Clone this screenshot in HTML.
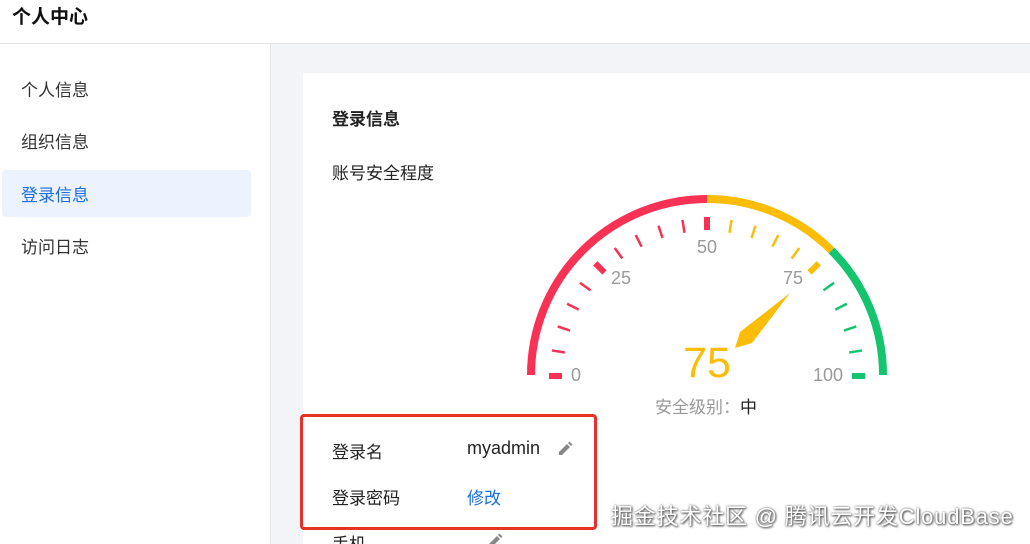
<!DOCTYPE html>
<html><head><meta charset="utf-8"><style>
*{margin:0;padding:0;box-sizing:border-box}
html,body{width:1030px;height:544px;overflow:hidden}
body{background:#f3f4f7;font-family:"Liberation Sans","Noto Sans CJK SC",sans-serif;position:relative;color:#222}
.hdr{position:absolute;left:0;top:0;width:1030px;height:44px;background:#fff;border-bottom:1px solid #e3e3e3}
.hdr span{position:absolute;left:12px;top:2px;font-size:19px;font-weight:bold;color:#111}
.side{position:absolute;left:0;top:44px;width:271px;height:500px;background:#fff;border-right:1px solid #e6e6e6}
.mi{position:absolute;left:21px;font-size:17px;color:#333}
.act{position:absolute;left:2px;top:126px;width:249px;height:47px;background:#ecf2fe;border-radius:4px}
.card{position:absolute;left:303px;top:73px;width:727px;height:471px;background:#fff}
.t{position:absolute;font-size:17px;color:#222}
.red{position:absolute;left:300px;top:414px;width:297px;height:116px;border:3px solid #e5312a;border-radius:4px}
.wm{position:absolute;left:611px;top:499px;font-size:22px;color:#fff;text-shadow:0 0 2px #555,1px 1px 2px #444;letter-spacing:0.8px}
</style></head><body>
<div class="hdr"><span>个人中心</span></div>
<div class="side">
<div class="act"></div>
<div class="mi" style="top:32px">个人信息</div>
<div class="mi" style="top:84px">组织信息</div>
<div class="mi" style="top:137px;color:#1a6fe0">登录信息</div>
<div class="mi" style="top:189px">访问日志</div>
</div>
<div class="card"></div>
<div class="t" style="left:332px;top:105px;font-weight:bold">登录信息</div>
<div class="t" style="left:332px;top:159px">账号安全程度</div>
<svg style="position:absolute;left:0;top:0" width="1030" height="544">
<g fill="none" stroke-width="8">
<path d="M531 375 A176 176 0 0 1 707 199" stroke="#f83255"/>
<path d="M707 199 A176 176 0 0 1 831.5 250.5" stroke="#fbbd08"/>
<path d="M831.5 250.5 A176 176 0 0 1 883 375" stroke="#14c46e"/>
</g>
<g>
<line x1="549" y1="376" x2="562" y2="376" stroke="#f83255" stroke-width="6"/>
<line x1="549" y1="375" x2="562" y2="375" stroke="#f83255" stroke-width="6" transform="rotate(45 707 375)"/>
<line x1="549" y1="375" x2="562" y2="375" stroke="#f83255" stroke-width="6" transform="rotate(90 707 375)"/>
<line x1="549" y1="375" x2="562" y2="375" stroke="#fbbd08" stroke-width="6" transform="rotate(135 707 375)"/>
<line x1="549" y1="374" x2="562" y2="374" stroke="#14c46e" stroke-width="6" transform="rotate(180 707 375)"/>
</g>
<g stroke-width="2.5">
<g stroke="#f83255">
<line x1="550" y1="375" x2="563" y2="375" transform="rotate(9 707 375)"/>
<line x1="550" y1="375" x2="563" y2="375" transform="rotate(18 707 375)"/>
<line x1="550" y1="375" x2="563" y2="375" transform="rotate(27 707 375)"/>
<line x1="550" y1="375" x2="563" y2="375" transform="rotate(36 707 375)"/>
<line x1="550" y1="375" x2="563" y2="375" transform="rotate(54 707 375)"/>
<line x1="550" y1="375" x2="563" y2="375" transform="rotate(63 707 375)"/>
<line x1="550" y1="375" x2="563" y2="375" transform="rotate(72 707 375)"/>
<line x1="550" y1="375" x2="563" y2="375" transform="rotate(81 707 375)"/>
</g>
<g stroke="#fbbd08">
<line x1="550" y1="375" x2="563" y2="375" transform="rotate(99 707 375)"/>
<line x1="550" y1="375" x2="563" y2="375" transform="rotate(108 707 375)"/>
<line x1="550" y1="375" x2="563" y2="375" transform="rotate(117 707 375)"/>
<line x1="550" y1="375" x2="563" y2="375" transform="rotate(126 707 375)"/>
</g>
<g stroke="#14c46e">
<line x1="550" y1="375" x2="563" y2="375" transform="rotate(144 707 375)"/>
<line x1="550" y1="375" x2="563" y2="375" transform="rotate(153 707 375)"/>
<line x1="550" y1="375" x2="563" y2="375" transform="rotate(162 707 375)"/>
<line x1="550" y1="375" x2="563" y2="375" transform="rotate(171 707 375)"/>
</g>
</g>
<g font-family="Liberation Sans,sans-serif" font-size="18" fill="#999" text-anchor="middle">
<text x="576" y="381">0</text>
<text x="621" y="284">25</text>
<text x="707" y="253">50</text>
<text x="793" y="284">75</text>
<text x="828" y="381">100</text>
</g>
<polygon points="790,293 740,332 735,348 752,343" fill="#fbbd08"/>
<text x="707" y="377" text-anchor="middle" font-family="Liberation Sans,sans-serif" font-size="43" fill="#fbbd08">75</text>
</svg>
<div class="t" style="left:655px;top:393px;font-size:17px;color:#999">安全级别：<span style="color:#222">中</span></div>
<div class="red"></div>
<div class="t" style="left:332px;top:438px">登录名</div>
<div class="t" style="left:467px;top:438px;font-size:18px">myadmin</div>
<svg style="position:absolute;left:557px;top:441px" width="16" height="16"><path d="M2 14 L2 11 L10 3 L13 6 L5 14 Z M11 2 L12.5 0.5 L15.5 3.5 L14 5 Z" fill="#888"/></svg>
<div class="t" style="left:332px;top:484px">登录密码</div>
<div class="t" style="left:467px;top:484px;color:#1a6fe0">修改</div>
<div class="t" style="left:332px;top:530px">手机</div>
<svg style="position:absolute;left:487px;top:533px" width="16" height="16"><path d="M2 14 L2 11 L10 3 L13 6 L5 14 Z M11 2 L12.5 0.5 L15.5 3.5 L14 5 Z" fill="#888"/></svg>
<div class="wm">掘金技术社区 @ 腾讯云开发CloudBase</div>
</body></html>
